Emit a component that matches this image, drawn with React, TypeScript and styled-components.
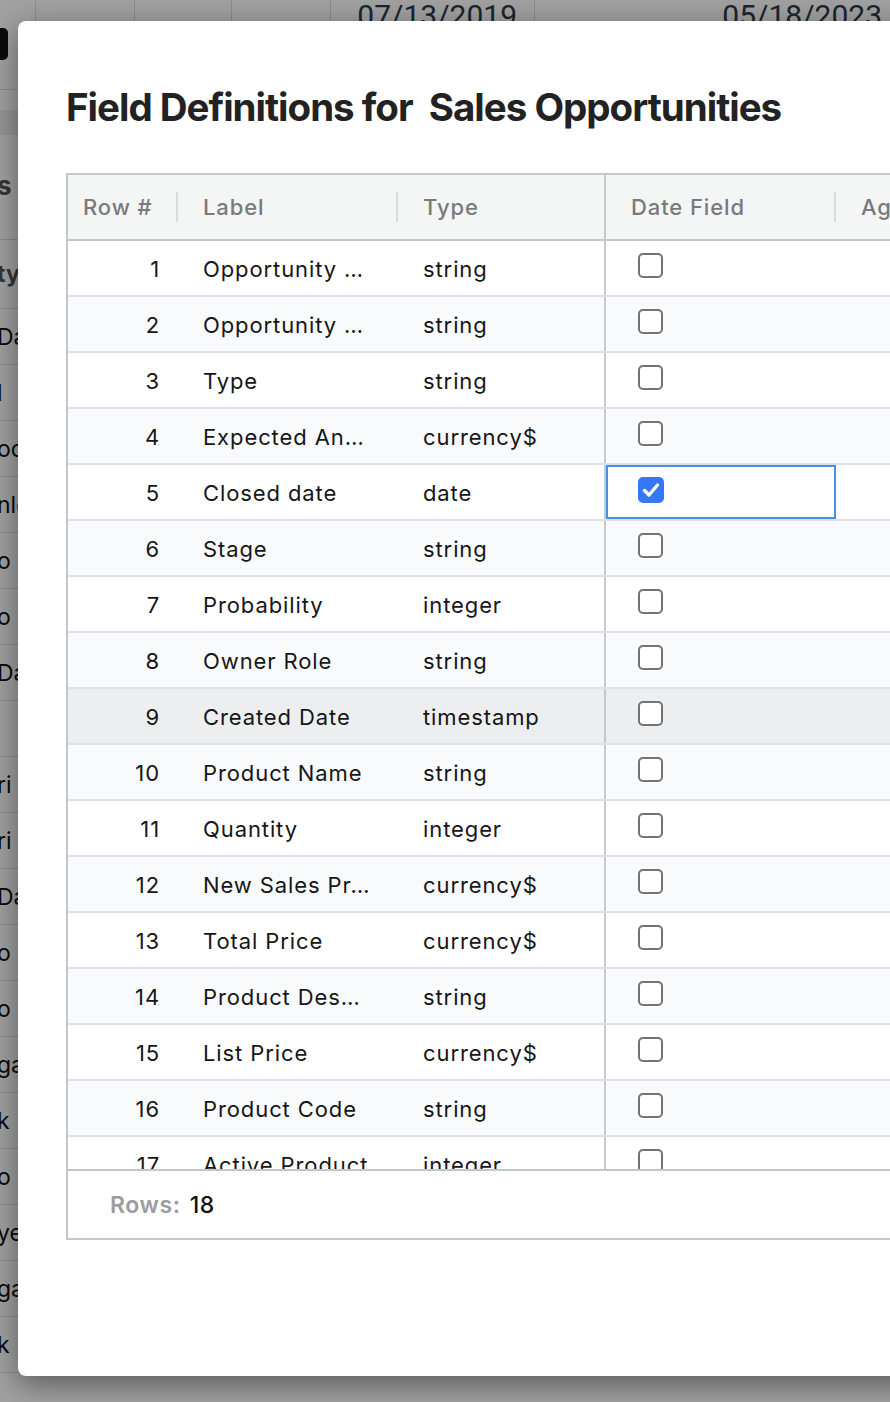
import React from 'react';
import styled, { createGlobalStyle } from 'styled-components';

const GlobalStyle = createGlobalStyle`
  html, body {
    margin: 0;
    padding: 0;
  }
  body {
    width: 890px;
    height: 1402px;
    overflow: hidden;
    background: #ffffff;
    font-family: Inter, "Noto Sans", sans-serif;
    -webkit-font-smoothing: antialiased;
  }
`;

const Page = styled.div`
  position: relative;
  width: 890px;
  height: 1402px;
  overflow: hidden;
  background: #ffffff;
`;

/* The grid page that sits behind the dialog */
const Behind = styled.div`
  display: flex;
  flex-direction: column;
  width: 890px;
`;

const TopStrip = styled.div`
  display: flex;
  height: 24px;
`;

const TopCell = styled.div<{ $w: number }>`
  width: ${(p) => p.$w}px;
  flex-shrink: 0;
  box-sizing: border-box;
  border-right: 1px solid #dcdcdc;
  padding: 1px 17px 0 0;
  text-align: right;
  font-family: Roboto, "Liberation Sans", sans-serif;
  font-size: 30px;
  line-height: 30px;
  color: #2c3a4b;
  white-space: nowrap;
  overflow: hidden;
`;

const Toolbar = styled.div`
  height: 66px;
  box-sizing: border-box;
  border-bottom: 1px solid #dddddd;
  padding-top: 4px;
`;

const BlackButton = styled.div`
  width: 28px;
  height: 32px;
  margin-left: -20px;
  border-radius: 5px;
  background: #111111;
`;

const Band = styled.div`
  height: 20px;
`;

const GreyBand = styled.div`
  height: 25px;
  background: #eeeeee;
`;

const BehindTitle = styled.div`
  height: 105px;
  box-sizing: border-box;
  border-bottom: 1px solid #dddddd;
  display: flex;
  align-items: center;
  padding-bottom: 4px;
  font-size: 26px;
  font-weight: 700;
  color: #555555;
`;

const BehindHeader = styled.div`
  height: 69px;
  box-sizing: border-box;
  border-bottom: 1px solid #dddddd;
  display: flex;
  align-items: center;
  font-size: 23px;
  font-weight: 700;
  color: #555555;
`;

const BehindRow = styled.div`
  height: 56px;
  box-sizing: border-box;
  border-bottom: 1px solid #dddddd;
  display: flex;
  align-items: center;
  font-size: 23px;
  color: #111111;
`;

const Clip = styled.span`
  margin-left: -3px;
`;

const Overlay = styled.div`
  position: absolute;
  inset: 0;
  background: rgba(0, 0, 0, 0.37);
`;

/* Dialog */
const Modal = styled.div`
  position: absolute;
  left: 18px;
  top: 21px;
  width: 1040px;
  height: 1355px;
  box-sizing: border-box;
  padding: 63px 0 0 48px;
  background: #ffffff;
  border-radius: 8px;
  box-shadow: 0 8px 30px rgba(0, 0, 0, 0.45);
  display: flex;
  flex-direction: column;
  overflow: hidden;
`;

const Title = styled.h1`
  margin: 0 0 0 0;
  font-size: 38.5px;
  line-height: 46px;
  font-weight: 700;
  color: #222222;
  white-space: pre;
  letter-spacing: -1px;
`;

const Table = styled.div`
  margin-top: 43px;
  width: 1172px;
  box-sizing: border-box;
  border: 2px solid #c3c7cb;
  display: flex;
  flex-direction: column;
`;

const columns = '110px 220px 208px 230px 400px';

const HeaderRow = styled.div`
  display: grid;
  grid-template-columns: ${columns};
  height: 66px;
  box-sizing: border-box;
  background: #f4f5f5;
  border-bottom: 2px solid #c3c7cb;
`;

const HeaderCell = styled.div<{ $sep?: boolean; $pinned?: boolean; $pad?: number }>`
  position: relative;
  display: flex;
  align-items: center;
  padding-left: ${(p) => p.$pad ?? 25}px;
  font-size: 22px;
  letter-spacing: 0.9px;
  font-weight: 500;
  color: #7a7a7a;
  white-space: nowrap;
  border-right: ${(p) => (p.$pinned ? '2px solid #c6cacd' : 'none')};
  &::after {
    content: '';
    display: ${(p) => (p.$sep ? 'block' : 'none')};
    position: absolute;
    right: 0;
    top: 17px;
    width: 2px;
    height: 30px;
    background: #d9dcdf;
  }
`;

const Body = styled.div`
  height: 928px;
  overflow: hidden;
`;

const Row = styled.div<{ $alt?: boolean; $hover?: boolean }>`
  display: grid;
  grid-template-columns: ${columns};
  height: 56px;
  box-sizing: border-box;
  border-bottom: 2px solid #dfe2e5;
  background: ${(p) => (p.$hover ? '#eceeef' : p.$alt ? '#f9fafc' : '#ffffff')};
`;

const Cell = styled.div<{ $align?: 'left' | 'right'; $pinned?: boolean; $focus?: boolean }>`
  box-sizing: border-box;
  padding: 16px ${(p) => (p.$align === 'right' ? 18 : 0)}px 0 ${(p) => (p.$align === 'right' ? 0 : 25)}px;
  text-align: ${(p) => p.$align ?? 'left'};
  font-size: 22px;
  letter-spacing: 0.9px;
  line-height: 25px;
  color: #161616;
  white-space: nowrap;
  overflow: hidden;
  border-right: ${(p) => (p.$pinned ? '2px solid #c6cacd' : 'none')};
  box-shadow: ${(p) => (p.$focus ? 'inset 0 0 0 2px #4a90e2' : 'none')};
`;

const CheckCell = styled(Cell)`
  padding: 12px 0 0 32px;
`;

const Box = styled.div`
  width: 25px;
  height: 25px;
  box-sizing: border-box;
  border: 2px solid #737373;
  border-radius: 5px;
  background: #ffffff;
`;

const Footer = styled.div`
  height: 69px;
  box-sizing: border-box;
  border-top: 2px solid #c3c7cb;
  display: flex;
  align-items: center;
  gap: 9px;
  padding-left: 42px;
  font-size: 23px;
  letter-spacing: 0.6px;
`;

const FooterLabel = styled.span`
  font-weight: 600;
  color: #9c9c9c;
`;

const FooterValue = styled.span`
  font-weight: 500;
  color: #111111;
`;

const Checked: React.FC = () => (
  <svg width="26" height="26" viewBox="0 0 26 26">
    <rect x="0" y="0" width="26" height="26" rx="5" fill="#3478f6" />
    <path d="M6.5 13.5 L11 18 L19.5 8" fill="none" stroke="#ffffff" strokeWidth="3.4" strokeLinecap="round" strokeLinejoin="round" />
  </svg>
);

const fields = [
  { label: 'Opportunity …', type: 'string' },
  { label: 'Opportunity …', type: 'string' },
  { label: 'Type', type: 'string' },
  { label: 'Expected An…', type: 'currency$' },
  { label: 'Closed date', type: 'date', date: true },
  { label: 'Stage', type: 'string' },
  { label: 'Probability', type: 'integer' },
  { label: 'Owner Role', type: 'string' },
  { label: 'Created Date', type: 'timestamp' },
  { label: 'Product Name', type: 'string' },
  { label: 'Quantity', type: 'integer' },
  { label: 'New Sales Pr…', type: 'currency$' },
  { label: 'Total Price', type: 'currency$' },
  { label: 'Product Des…', type: 'string' },
  { label: 'List Price', type: 'currency$' },
  { label: 'Product Code', type: 'string' },
  { label: 'Active Product', type: 'integer' },
  { label: 'Product Family', type: 'string' },
];

const behindRows = ['Da', 'l', 'oc', 'nle', 'o', 'o', 'Da', '', 'ri', 'ri', 'Da', 'o', 'o', 'ga', 'k', 'o', 'ye', 'ga', 'k', ''];

export default function App() {
  return (
    <>
      <GlobalStyle />
      <Page>
        <Behind>
          <TopStrip>
            <TopCell $w={36} />
            <TopCell $w={99} />
            <TopCell $w={97} />
            <TopCell $w={99} />
            <TopCell $w={204}>07/13/2019</TopCell>
            <TopCell $w={365}>05/18/2023</TopCell>
          </TopStrip>
          <Toolbar>
            <BlackButton />
          </Toolbar>
          <Band />
          <GreyBand />
          <BehindTitle>
            <Clip>s</Clip>
          </BehindTitle>
          <BehindHeader>
            <Clip>ty</Clip>
          </BehindHeader>
          {behindRows.map((t, i) => (
            <BehindRow key={i}>
              <Clip>{t}</Clip>
            </BehindRow>
          ))}
        </Behind>
        <Overlay />
        <Modal>
          <Title>{'Field Definitions for  Sales Opportunities'}</Title>
          <Table>
            <HeaderRow>
              <HeaderCell $sep $pad={15}>Row #</HeaderCell>
              <HeaderCell $sep>Label</HeaderCell>
              <HeaderCell $pinned>Type</HeaderCell>
              <HeaderCell $sep>Date Field</HeaderCell>
              <HeaderCell>Aggregation</HeaderCell>
            </HeaderRow>
            <Body>
              {fields.map((f, i) => (
                <Row key={i} $alt={i % 2 === 1} $hover={i === 8}>
                  <Cell $align="right">{i + 1}</Cell>
                  <Cell>{f.label}</Cell>
                  <Cell $pinned>{f.type}</Cell>
                  <CheckCell $focus={!!f.date}>{f.date ? <Checked /> : <Box />}</CheckCell>
                  <Cell />
                </Row>
              ))}
            </Body>
            <Footer>
              <FooterLabel>Rows:</FooterLabel>
              <FooterValue>18</FooterValue>
            </Footer>
          </Table>
        </Modal>
      </Page>
    </>
  );
}
